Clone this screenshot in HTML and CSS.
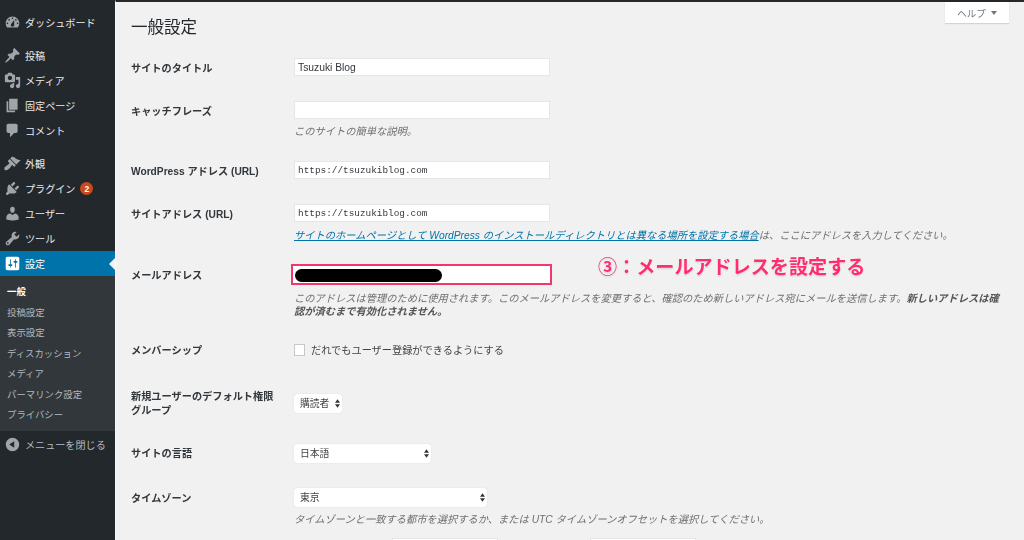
FILE: index.html
```html
<!DOCTYPE html>
<html lang="ja">
<head>
<meta charset="utf-8">
<title>一般設定</title>
<link rel="stylesheet" href="styles.css">
</head>
<body>
<div class="shell">
  <nav class="side">
    <ul class="menu first">
      <li><svg class="ic" viewBox="0 0 20 20"><path d="M3.76 16h12.48c1.1-1.37 1.76-3.11 1.76-5 0-4.42-3.58-8-8-8s-8 3.58-8 8c0 1.89.66 3.63 1.76 5zM10 4c.55 0 1 .45 1 1s-.45 1-1 1-1-.45-1-1 .45-1 1-1zM6 6c.55 0 1 .45 1 1s-.45 1-1 1-1-.45-1-1 .45-1 1-1zm8 0c.55 0 1 .45 1 1s-.45 1-1 1-1-.45-1-1 .45-1 1-1zm-5.37 5.55L12 7v6c0 1.1-.9 2-2 2s-2-.9-2-2c0-.57.24-1.08.63-1.45zM4 10c.55 0 1 .45 1 1s-.45 1-1 1-1-.45-1-1 .45-1 1-1zm12 0c.55 0 1 .45 1 1s-.45 1-1 1-1-.45-1-1 .45-1 1-1z"/></svg>ダッシュボード</li>
    </ul>
    <ul class="menu">
      <li><svg class="ic" viewBox="0 0 20 20"><path d="M10.44 3.02l1.82-1.82 6.36 6.35-1.83 1.82c-1.05-.68-2.48-.57-3.41.36l-.75.75c-.92.93-1.04 2.35-.35 3.41l-1.83 1.82-2.41-2.41-2.8 2.79c-.42.42-3.38 2.71-3.8 2.29s1.86-3.39 2.28-3.81l2.79-2.79L4.1 9.36l1.83-1.82c1.05.69 2.48.57 3.4-.36l.75-.75c.93-.92 1.05-2.35.36-3.41z"/></svg>投稿</li>
      <li><svg class="ic" viewBox="0 0 20 20"><path d="M13 11V4c0-.55-.45-1-1-1h-1.67L9 1H5L3.67 3H2c-.55 0-1 .45-1 1v7c0 .55.45 1 1 1h10c.55 0 1-.45 1-1zM7 4.5c1.38 0 2.5 1.12 2.5 2.5S8.38 9.5 7 9.5 4.5 8.38 4.5 7 5.62 4.5 7 4.5zM14 6h5v10.5c0 1.38-1.12 2.5-2.5 2.5S14 17.88 14 16.5s1.12-2.5 2.5-2.5c.17 0 .34.02.5.05V9h-3V6zm-4 8.05V13h2v3.5c0 1.38-1.12 2.5-2.5 2.5S7 17.88 7 16.5 8.12 14 9.5 14c.17 0 .34.02.5.05z"/></svg>メディア</li>
      <li><svg class="ic" viewBox="0 0 20 20"><path d="M6 15V2h10v13H6zm-1 1h8v2H3V5h2v11z"/></svg>固定ページ</li>
      <li><svg class="ic" viewBox="0 0 20 20"><path d="M5 2h9c1.1 0 2 .9 2 2v7c0 1.1-.9 2-2 2h-2l-5 5v-5H5c-1.1 0-2-.9-2-2V4c0-1.1.9-2 2-2z"/></svg>コメント</li>
    </ul>
    <ul class="menu">
      <li><svg class="ic" viewBox="0 0 20 20"><path d="M14.48 11.06L7.41 3.99l1.5-1.5c.5-.56 2.3-.47 3.51.32 1.21.8 1.43 1.28 2.91 2.1 1.18.64 2.45 1.26 4.45.85zm-.71.71L6.7 4.7 4.93 6.47c-.39.39-.39 1.02 0 1.41l1.06 1.06c.39.39.39 1.03 0 1.42-.6.6-1.43 1.11-2.21 1.69-.35.26-.7.53-1.01.84C1.43 13.23.4 14.91.4 16c0 .55.13 1.08.54 1.5s.96.54 1.51.54c1.1-.1 2.77-1.04 4.09-2.37.31-.31.58-.66.85-1.02.57-.77 1.08-1.6 1.67-2.19.39-.39 1.03-.39 1.42 0l1.06 1.06c.39.39 1.02.39 1.41 0z"/></svg>外観</li>
      <li><svg class="ic" viewBox="0 0 20 20"><path d="M13.11 4.36L9.87 7.6 8 5.73l3.24-3.24c.35-.34 1.05-.2 1.56.32.52.51.66 1.21.31 1.55zm-8 1.77l.91-1.12 9.01 9.01-1.19.84c-.71.71-2.63 1.16-3.82 1.16H6.14L4.9 17.26c-.59.59-1.54.59-2.12 0-.59-.58-.59-1.53 0-2.12l1.24-1.24v-3.88c0-1.13.4-3.19 1.09-3.89zm7.26 3.97l3.24-3.24c.34-.35 1.04-.21 1.55.31.52.51.66 1.21.31 1.55l-3.24 3.25z"/></svg>プラグイン<span class="badge">2</span></li>
      <li><svg class="ic" viewBox="0 0 20 20"><path d="M10 9.25c-2.27 0-2.73-3.44-2.73-3.44C7 4.02 7.82 2 9.97 2c2.16 0 2.98 2.02 2.71 3.81 0 0-.41 3.44-2.68 3.44zm0 2.57L12.72 10c2.39 0 4.52 2.33 4.52 4.53v2.49s-3.65 1.13-7.24 1.13c-3.65 0-7.24-1.13-7.24-1.13v-2.49c0-2.25 1.94-4.48 4.47-4.48z"/></svg>ユーザー</li>
      <li><svg class="ic" viewBox="0 0 20 20"><path d="M16.68 9.77c-1.34 1.34-3.3 1.67-4.95.99l-5.41 6.52c-.99.99-2.59.99-3.58 0s-.99-2.59 0-3.57l6.52-5.42c-.68-1.65-.35-3.61.99-4.95 1.28-1.28 3.12-1.62 4.72-1.06l-2.89 2.89 2.82 2.82 2.86-2.87c.53 1.58.18 3.39-1.08 4.65zM3.81 16.21c.4.39 1.04.39 1.43 0 .4-.4.4-1.04 0-1.43-.39-.4-1.03-.4-1.43 0-.39.39-.39 1.03 0 1.43z"/></svg>ツール</li>
      <li class="current"><svg class="ic" viewBox="0 0 20 20"><path d="M18 16V4c0-1.1-.9-2-2-2H4c-1.1 0-2 .9-2 2v12c0 1.1.9 2 2 2h12c1.1 0 2-.9 2-2zM8 11h1c.55 0 1 .45 1 1s-.45 1-1 1H8v1.5c0 .28-.22.5-.5.5s-.5-.22-.5-.5V13H6c-.55 0-1-.45-1-1s.45-1 1-1h1V5.5c0-.28.22-.5.5-.5s.5.22.5.5V11zm5-2h-1c-.55 0-1-.45-1-1s.45-1 1-1h1V5.5c0-.28.22-.5.5-.5s.5.22.5.5V7h1c.55 0 1 .45 1 1s-.45 1-1 1h-1v5.5c0 .28-.22.5-.5.5s-.5-.22-.5-.5V9z"/></svg>設定</li>
    </ul>
    <ul class="sub">
      <li class="on">一般</li>
      <li>投稿設定</li>
      <li>表示設定</li>
      <li>ディスカッション</li>
      <li>メディア</li>
      <li>パーマリンク設定</li>
      <li>プライバシー</li>
    </ul>
    <div class="close"><svg class="ic" viewBox="0 0 20 20"><path d="M10 2.16c4.33 0 7.84 3.51 7.84 7.84s-3.51 7.84-7.84 7.84S2.16 14.33 2.16 10 5.71 2.16 10 2.16zm2 11.72V6.12L6.18 9.97z"/></svg>メニューを閉じる</div>
  </nav>
  <main class="main">
    <div class="help">ヘルプ <span class="caret"></span></div>
    <h1 class="title">一般設定</h1>
    <form class="form">
      <div class="row r1"><label class="lab">サイトのタイトル</label><div class="f"><input class="inp" value="Tsuzuki Blog"></div></div>
      <div class="row r2"><label class="lab">キャッチフレーズ</label><div class="f"><input class="inp"><p class="desc d2">このサイトの簡単な説明。</p></div></div>
      <div class="row r3"><label class="lab">WordPress アドレス (URL)</label><div class="f"><input class="inp mono" value="https://tsuzukiblog.com"></div></div>
      <div class="row r4"><label class="lab">サイトアドレス (URL)</label><div class="f"><input class="inp mono" value="https://tsuzukiblog.com"><p class="desc d4"><a class="lnk">サイトのホームページとして WordPress のインストールディレクトリとは異なる場所を設定する場合</a>は、ここにアドレスを入力してください。</p></div></div>
      <div class="row r5"><label class="lab">メールアドレス</label><div class="f"><div class="mailbox"><input class="inp mail"><span class="mask"></span></div><p class="desc d5">このアドレスは管理のために使用されます。このメールアドレスを変更すると、確認のため新しいアドレス宛にメールを送信します。<b>新しいアドレスは確認が済むまで有効化されません。</b></p></div></div>
      <div class="row r6"><label class="lab">メンバーシップ</label><div class="f check"><span class="cb"></span>だれでもユーザー登録ができるようにする</div></div>
      <div class="row r7"><label class="lab two">新規ユーザーのデフォルト権限グループ</label><div class="f"><span class="sel s1">購読者<svg class="ar" viewBox="0 0 6 10"><path d="M3 0l3 4H0zM3 10L0 6h6z"/></svg></span></div></div>
      <div class="row r8"><label class="lab">サイトの言語</label><div class="f"><span class="sel s2">日本語<svg class="ar" viewBox="0 0 6 10"><path d="M3 0l3 4H0zM3 10L0 6h6z"/></svg></span></div></div>
      <div class="row r9"><label class="lab">タイムゾーン</label><div class="f"><span class="sel s3">東京<svg class="ar" viewBox="0 0 6 10"><path d="M3 0l3 4H0zM3 10L0 6h6z"/></svg></span><p class="desc d9">タイムゾーンと一致する都市を選択するか、または UTC タイムゾーンオフセットを選択してください。</p></div></div>
      <div class="row r10"><span></span><div class="f next"><span class="stub"></span><span class="stub"></span></div></div>
    </form>
    <div class="note">③：メールアドレスを設定する</div>
  </main>
</div>
</body>
</html>
```
FILE: styles.css
```css
* { box-sizing: border-box; }
html, body { margin: 0; height: 540px; overflow: hidden; }
body { font-family: "Liberation Sans", "Noto Sans CJK JP", sans-serif; background: #f1f1f1; color: #444; }
.shell { display: flex; height: 540px; filter: blur(.3px); }
ul { list-style: none; margin: 0; padding: 0; }

.side { width: 115px; flex: none; background: #23282d; color: #e8eaeb; font-size: 10.1px; padding-top: 10px; }
.menu { margin-bottom: 8px; }
.menu li { display: flex; align-items: center; height: 25px; }
.ic { width: 17px; height: 17px; margin: 0 4px; fill: #a0a5aa; flex: none; }
.menu li.current { position: relative; background: #0073aa; color: #fff; }
.current .ic { fill: #fff; }
.current::after { content: ""; position: absolute; right: 0; top: 7px; border: 6px solid transparent; border-right-color: #f1f1f1; border-left-width: 0; }
.menu:nth-of-type(3) { margin-bottom: 0; }
.badge { width: 13px; height: 13px; border-radius: 50%; background: #ca4a1f; color: #fff; font-size: 8.5px; font-weight: 700; display: flex; align-items: center; justify-content: center; margin-left: 5px; }
.sub { background: #32373c; color: #b4b9be; font-size: 9.4px; padding: 6px 0; height: 155px; }
.sub li { height: 20.5px; line-height: 20.5px; padding-left: 7px; }
.sub .on { color: #fff; font-weight: 700; }
.close { display: flex; align-items: center; height: 26px; color: #b4b9be; }

.main { position: relative; flex: 1; height: 540px; overflow: hidden; border-top: 2px solid #23282d; border-left: 1px solid #f8f8f8; padding-left: 15px; min-width: 0; }
.help { position: absolute; top: 0; left: 829px; width: 64px; height: 21px; background: #fff; box-shadow: 0 1px 1px rgba(0,0,0,.12); font-size: 9.5px; color: #72777c; display: flex; align-items: center; justify-content: center; gap: 5px; }
.caret { border: 3px solid transparent; border-top: 4px solid #72777c; border-bottom: 0; }
.title { margin: 15px 0 0; font-size: 16.5px; line-height: 21px; font-weight: 400; color: #23282d; height: 41px; }

.row { display: grid; grid-template-columns: 163px 1fr; }
.r2 { margin-top: 25px; }
.r3 { margin-top: 22px; }
.r4 { margin-top: 25px; }
.r5 { margin-top: 20px; }
.r6 { margin-top: 23px; }
.r7 { margin-top: 31px; }
.r8 { margin-top: 26px; }
.r9 { margin-top: 25px; }
.r10 { margin-top: 11px; }

.lab { font-size: 10.2px; font-weight: 700; color: #32373c; line-height: 18px; height: 18px; padding-top: 2px; }
.r5 .lab { line-height: 21px; padding-top: 1px; }
.r6 .lab, .r8 .lab { padding-top: 1px; }
.lab.two { line-height: 13.5px; height: 28px; width: 150px; padding-top: 0; }
.inp { display: block; width: 256px; height: 18px; border: 1px solid #e6e6e6; background: #fff; padding: 0 3px; font: 10.3px "Liberation Sans", "Noto Sans CJK JP", sans-serif; color: #32373c; outline: none; }
.mono { font: 9.4px "Liberation Mono", monospace; }
.mailbox { position: relative; width: 261px; height: 21px; margin-left: -3px; border: 2px solid #f0386f; background: #fff; }
.mail { width: 100%; height: 100%; border: 0; }
.mask { position: absolute; left: 2px; top: 3px; width: 147px; height: 13px; border-radius: 7px; background: #000; }
.desc { margin: 0; font-size: 10.25px; font-style: italic; color: #6f6f6f; }
.desc b { color: #555; }
.d2 { margin-top: 5px; line-height: 15px; }
.d4 { margin-top: 6px; line-height: 16px; white-space: nowrap; }
.d5 { margin-top: 7px; line-height: 13px; width: 712px; }
.d9 { margin-top: 5px; line-height: 15px; white-space: nowrap; }
.lnk { color: #0073aa; text-decoration: underline; }
.check { display: flex; align-items: center; font-size: 10.2px; color: #444; height: 16px; }
.cb { width: 11px; height: 12px; margin-top: 2px; border: 1px solid #c4c8cc; background: #fff; margin-right: 6px; }

.sel { position: relative; display: flex; align-items: center; height: 19px; padding: 0 0 2px 6px; background: #fff; border-radius: 3px; box-shadow: 0 0 1px rgba(0,0,0,.2); font-size: 9.8px; color: #444; }
.s1 { width: 48px; margin-top: 4px; }
.s2 { width: 137px; }
.s3 { width: 193px; }
.ar { position: absolute; right: 2px; top: 5px; width: 5px; height: 9px; fill: #333; }
.next { display: flex; gap: 92px; padding-left: 98px; }
.stub { width: 106px; height: 20px; background: #fff; border: 1px solid #e6e6e6; }

.note { position: absolute; left: 482px; top: 252px; font-size: 19.1px; line-height: 24px; font-weight: 700; color: #ff2d6f; white-space: nowrap; text-shadow: 0 0 2px #fff, 0 1px 2px rgba(0,0,0,.2); font-family: "Noto Sans CJK JP", sans-serif; }
```
